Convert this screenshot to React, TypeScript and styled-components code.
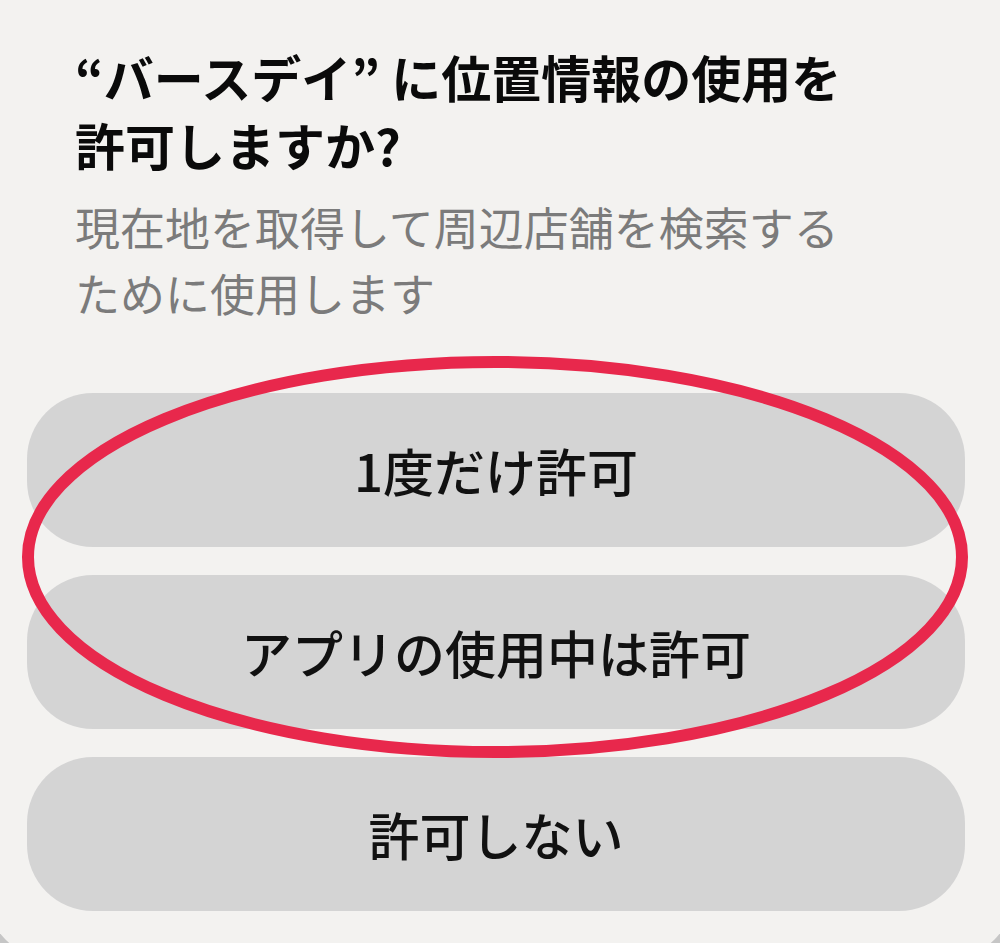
import React from 'react';
import styled, { createGlobalStyle } from 'styled-components';

const GlobalStyle = createGlobalStyle`
    html, body {
        margin: 0;
        padding: 0;
        background: #c6c6c6;
    }

    body {
        font-family: "Noto Sans CJK JP", "Noto Sans", sans-serif;
    }
`;

const Page = styled.div`
    position: relative;
    width: 1000px;
    height: 943px;
    overflow: hidden;
    background: #c6c6c6;
`;

// the sheet runs a little past the photo on both sides, so only the start of its corners shows
const Sheet = styled.div`
    box-sizing: border-box;
    height: 960px;
    width: 1030px;
    margin-left: -15px;
    background: #f3f2f0;
    border-bottom-left-radius: 70px;
    border-bottom-right-radius: 70px;
    padding: 42px 0 0 42px;
    display: flex;
    flex-direction: column;
`;

const Heading = styled.div`
    padding-left: 48px;
    padding-right: 60px;
`;

const Title = styled.h1`
    margin: 0;
    font-size: 50px;
    line-height: 68px;
    font-weight: 700;
    color: #0a0a0a;
`;

const Message = styled.p`
    margin: 16px 0 0;
    font-size: 45px;
    line-height: 66px;
    font-weight: 400;
    color: #7b7b7b;
`;

const Actions = styled.div`
    margin-top: 67px;
    width: 938px;
    display: flex;
    flex-direction: column;
    gap: 28px;
`;

const ActionButton = styled.button`
    height: 154px;
    border: none;
    border-radius: 66px;
    background: #d4d4d4;
    color: #111111;
    font-family: "Noto Sans CJK JP", "Noto Sans", sans-serif;
    font-size: 51px;
    font-weight: 500;
    display: flex;
    align-items: center;
    justify-content: center;
    padding: 0;
    cursor: pointer;
`;

const Highlight = styled.svg`
    position: absolute;
    left: 0;
    top: 0;
    width: 1000px;
    height: 943px;
    pointer-events: none;
`;

export default function App() {
    return (
        <Page>
            <GlobalStyle />
            <Sheet>
                <Heading>
                    <Title>
                        “バースデイ” に位置情報の使用を
                        <br />
                        許可しますか?
                    </Title>
                    <Message>
                        現在地を取得して周辺店舗を検索する
                        <br />
                        ために使用します
                    </Message>
                </Heading>
                <Actions>
                    <ActionButton>1度だけ許可</ActionButton>
                    <ActionButton>アプリの使用中は許可</ActionButton>
                    <ActionButton>許可しない</ActionButton>
                </Actions>
            </Sheet>
            <Highlight viewBox="0 0 1000 943">
                <ellipse cx="495" cy="557" rx="467" ry="195" fill="none" stroke="#e8284c" strokeWidth="12" />
            </Highlight>
        </Page>
    );
}
